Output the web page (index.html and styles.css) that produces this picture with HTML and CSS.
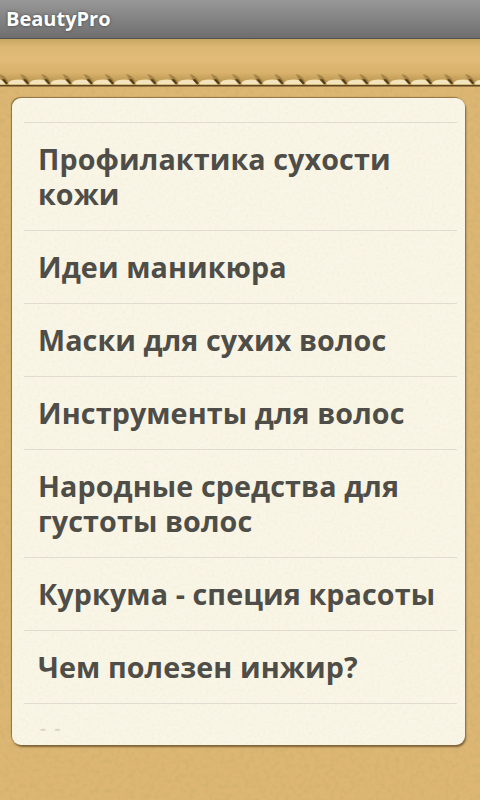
FILE: index.html
```html
<!DOCTYPE html>
<html lang="ru">

<head>
  <meta charset="UTF-8">
  <meta name="viewport" content="width=device-width, initial-scale=1.0">
  <title>BeautyPro</title>

  <link rel="stylesheet" href="styles.css">
</head>

<body>
  <div class="titlebar">BeautyPro</div>

  <div class="screen">
    <!-- leather grain behind everything -->
    <svg class="grain" width="480" height="761">
      <filter id="leatherNoise">
        <feTurbulence type="fractalNoise" baseFrequency="0.2" numOctaves="4" seed="4"/>
        <feColorMatrix values="0 0 0 0 0.5  0 0 0 0 0.36  0 0 0 0 0.15  0.4 0.4 0 0 -0.36"/>
      </filter>
      <rect width="480" height="761" filter="url(#leatherNoise)"/>
    </svg>

    <div class="seam">
      <svg class="stitches" width="480" height="16">
        <defs>
          <pattern id="stitch" x="8" width="21.2" height="16" patternUnits="userSpaceOnUse">
            <path d="M12 0 Q18 1 21.2 7 L16 7 Z" fill="#7d5f2c" opacity="0.5"/>
            <path d="M0 9 L3 6.5 Q10 5 15 6 L19 10.5 L1 10.5 Z" fill="#f3e4bc"/>
            <path d="M15 5.5 L17.5 5 L21.2 9 L19.5 10.5 Z" fill="#4f3a18"/>
          </pattern>
        </defs>
        <rect width="480" height="16" fill="url(#stitch)"/>
        <rect y="11" width="480" height="1.5" fill="#5f451f"/>
      </svg>
    </div>

    <div class="card">
      <svg class="paper" width="453" height="647">
        <filter id="paperNoise">
          <feTurbulence type="fractalNoise" baseFrequency="0.35" numOctaves="3" seed="9"/>
          <feColorMatrix values="0 0 0 0 0.78  0 0 0 0 0.72  0 0 0 0 0.52  0.3 0.3 0 0 -0.24"/>
        </filter>
        <rect width="453" height="647" filter="url(#paperNoise)"/>
      </svg>
      <ul class="list">
        <li class="item">Профилактика сухости кожи</li>
        <li class="item">Идеи маникюра</li>
        <li class="item">Маски для сухих волос</li>
        <li class="item">Инструменты для волос</li>
        <li class="item">Народные средства для густоты волос</li>
        <li class="item">Куркума - специя красоты</li>
        <li class="item">Чем полезен инжир?</li>
        <li class="item item-faded">- -</li>
      </ul>
    </div>
  </div>
</body>

</html>
```

FILE: styles.css
```css
* {
  box-sizing: border-box;
}

body {
  margin: 0;
  width: 480px;
  height: 800px;
  overflow: hidden;
  font-family: "Open Sans", "Noto Sans", sans-serif;
  background-color: #dcb672;
}

.titlebar {
  height: 39px;
  padding: 0 6px;
  border-bottom: 1px solid #55524a;
  background: linear-gradient(#989898, #6e6e6e);
  color: #ffffff;
  font-size: 20px;
  font-weight: bold;
  line-height: 38px;
  text-shadow: 0 0 3px #444444;
}

.screen {
  position: relative;
  height: 761px;
  background-color: #dcb672;
}

.grain {
  position: absolute;
  top: 0;
  left: 0;
}

.seam {
  position: relative;
  height: 47px;
  background: linear-gradient(#c7a663 0, #dcb773 8px, #e2bc78 20px, #d8b16b 34px, #b8954f 44px);
}

.stitches {
  position: absolute;
  left: 0;
  bottom: -4px;
}

.card {
  position: relative;
  width: 453px;
  height: 647px;
  margin: 12px 0 0 12px;
  padding: 24px 8px 0 12px;
  overflow: hidden;
  border-radius: 9px;
  background-color: #faf6e7;
  box-shadow: -1px -1px 1px #8f7443, 1px 2px 2px #7d6236;
}

.paper {
  position: absolute;
  top: 0;
  left: 0;
}

.list {
  position: relative;
  margin: 0;
  padding: 0;
  list-style: none;
}

.item {
  padding: 18px 14px 19px;
  border-top: 1px solid #e2dcd0;
  color: #4f4d48;
  font-size: 28.7px;
  font-weight: bold;
  line-height: 35px;
  letter-spacing: 0.1px;
}

.item-faded {
  padding: 12px 16px 0;
  color: #dcd7c9;
  font-size: 18px;
  line-height: 24px;
  letter-spacing: 2px;
}
```
